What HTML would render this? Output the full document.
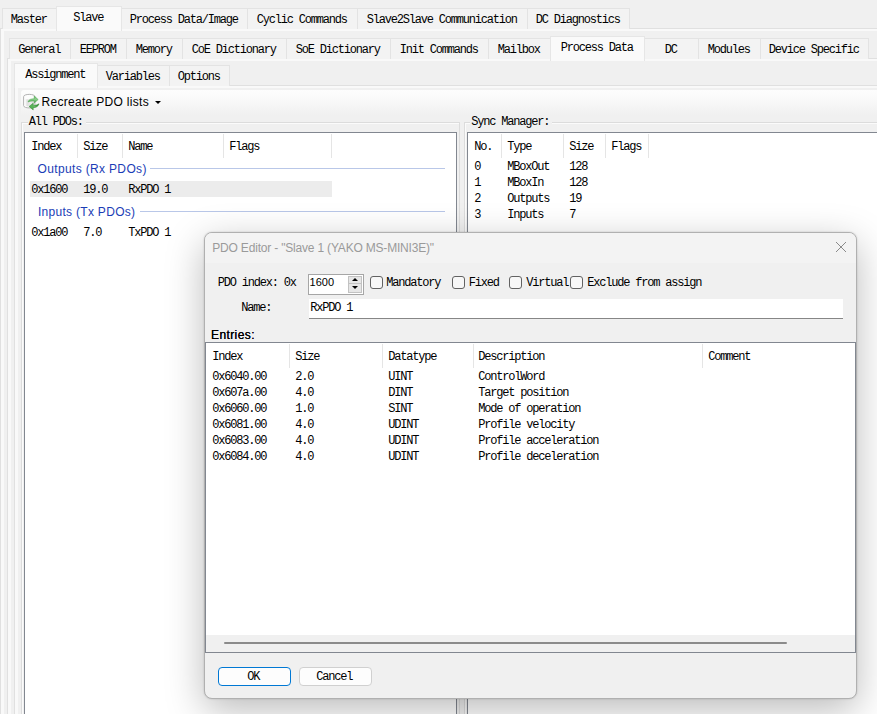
<!DOCTYPE html>
<html lang="en"><head><meta charset="utf-8"><title>PDO Editor</title>
<style>
html,body{margin:0;padding:0}
body{width:877px;height:714px;overflow:hidden;background:#f0f0f0;position:relative;font:12px/12px "Liberation Mono",monospace;color:#000}
div,span{position:absolute;box-sizing:border-box;white-space:pre}
.m{font:12px/12px "Liberation Mono",monospace;letter-spacing:-1.2px;color:#000;margin-left:-0.7px}
.s{font:12px/12px "Liberation Sans",sans-serif;color:#000}
.tab{background:#f3f3f3;border:1px solid #e3e3e3;border-bottom:none}
.tab.sel{background:#fafafa;border-color:#e6e6e6}
.pane{border:1px solid #e0e0e0;background:#f9f9f9}
.page{background:#f0f0f0}
.lv{background:#fff;border:1px solid #828790}
.sep{width:1px;background:#e5e5e5}
.cb{width:13px;height:13px;border:1px solid #626262;border-radius:3px;background:#f7f7f7}
</style></head>
<body>
<div class="pane" style="left:0px;top:28px;width:900px;height:800px;"></div>
<div class="page" style="left:4px;top:31px;width:900px;height:800px;"></div>
<div class="tab" style="left:2px;top:8px;width:55px;height:21px;"></div>
<span class="m" style="left:11.5px;top:14px;">Master</span>
<div class="tab" style="left:121px;top:8px;width:127px;height:21px;"></div>
<span class="m" style="left:130.5px;top:14px;">Process Data/Image</span>
<div class="tab" style="left:247px;top:8px;width:111px;height:21px;"></div>
<span class="m" style="left:257.5px;top:14px;">Cyclic Commands</span>
<div class="tab" style="left:357px;top:8px;width:171px;height:21px;"></div>
<span class="m" style="left:367.5px;top:14px;">Slave2Slave Communication</span>
<div class="tab" style="left:527px;top:8px;width:103px;height:21px;"></div>
<span class="m" style="left:536.5px;top:14px;">DC Diagnostics</span>
<div class="tab sel" style="left:56px;top:6px;width:66px;height:25px;"></div>
<span class="m" style="left:74.0px;top:12px;">Slave</span>
<div class="pane" style="left:7px;top:58px;width:900px;height:800px;"></div>
<div class="page" style="left:11px;top:61px;width:900px;height:800px;"></div>
<div class="tab" style="left:9px;top:38px;width:62px;height:21px;"></div>
<span class="m" style="left:19.0px;top:44px;">General</span>
<div class="tab" style="left:70px;top:38px;width:57px;height:21px;"></div>
<span class="m" style="left:80.5px;top:44px;">EEPROM</span>
<div class="tab" style="left:126px;top:38px;width:57px;height:21px;"></div>
<span class="m" style="left:136.5px;top:44px;">Memory</span>
<div class="tab" style="left:182px;top:38px;width:105px;height:21px;"></div>
<span class="m" style="left:192.5px;top:44px;">CoE Dictionary</span>
<div class="tab" style="left:286px;top:38px;width:105px;height:21px;"></div>
<span class="m" style="left:296.5px;top:44px;">SoE Dictionary</span>
<div class="tab" style="left:390px;top:38px;width:99px;height:21px;"></div>
<span class="m" style="left:400.5px;top:44px;">Init Commands</span>
<div class="tab" style="left:488px;top:38px;width:63px;height:21px;"></div>
<span class="m" style="left:498.5px;top:44px;">Mailbox</span>
<div class="tab" style="left:644px;top:38px;width:55px;height:21px;"></div>
<span class="m" style="left:665.5px;top:44px;">DC</span>
<div class="tab" style="left:698px;top:38px;width:63px;height:21px;"></div>
<span class="m" style="left:708.5px;top:44px;">Modules</span>
<div class="tab" style="left:760px;top:38px;width:109px;height:21px;"></div>
<span class="m" style="left:769.5px;top:44px;">Device Specific</span>
<div class="tab sel" style="left:550px;top:36px;width:95px;height:25px;"></div>
<span class="m" style="left:561.5px;top:42px;">Process Data</span>
<div class="pane" style="left:14px;top:85px;width:900px;height:800px;"></div>
<div class="page" style="left:18px;top:88px;width:900px;height:800px;"></div>
<div class="tab" style="left:97px;top:65px;width:73px;height:21px;"></div>
<span class="m" style="left:106.5px;top:71px;">Variables</span>
<div class="tab" style="left:169px;top:65px;width:61px;height:21px;"></div>
<span class="m" style="left:178.5px;top:71px;">Options</span>
<div class="tab sel" style="left:14px;top:63px;width:84px;height:25px;"></div>
<span class="m" style="left:26.0px;top:69px;">Assignment</span>
<div class="" style="left:21px;top:90px;width:900px;height:25px;background:linear-gradient(#fdfdfd 0%,#f9f9f9 40%,#f0f0f0 100%);border-top-left-radius:3px;"></div>
<svg style="position:absolute;left:20px;top:90px" width="24" height="24" viewBox="0 0 24 24">
<defs>
<linearGradient id="cy" x1="0" x2="1"><stop offset="0" stop-color="#ffffff"/><stop offset="0.25" stop-color="#dedede"/><stop offset="0.7" stop-color="#ececec"/><stop offset="1" stop-color="#d2d2d2"/></linearGradient>
<linearGradient id="ga" x1="0" x2="0" y1="0" y2="1"><stop offset="0" stop-color="#63b963"/><stop offset="0.45" stop-color="#8fd08f"/><stop offset="1" stop-color="#3f9c3f"/></linearGradient>
<linearGradient id="gb" x1="0" x2="1" y1="0.3" y2="0"><stop offset="0" stop-color="#4fae4f"/><stop offset="0.45" stop-color="#62ba62"/><stop offset="1" stop-color="#1c781c"/></linearGradient>
</defs>
<path d="M3.6 6.7 C3.6 3.6 14.9 3.6 14.9 6.7 L14.9 15.6 C14.9 18.7 3.6 18.7 3.6 15.6 Z" fill="#fdfdfd" stroke="#b2b2b2" stroke-width="1"/>
<path d="M5 8.6 C6.4 9.8 11.8 9.8 13.6 8.8 L13.6 15.2 C12.2 17 6.4 17 5 15.2 Z" fill="url(#cy)"/>
<path d="M8 12 C8.8 9.4 11 8.7 14.2 8.8 L14.2 6 L18.2 9.6 L14.2 13 L14.2 11 C11.8 10.8 9.8 11.2 8 12 Z" fill="url(#ga)" stroke="#4aa64a" stroke-width="0.5"/>
<path d="M19 13.8 C18.3 16.6 16 17.6 13.2 17.7 L13.2 20 L9.1 16.5 L13.2 13.2 L13.2 15.4 C15.5 15.4 17.4 14.9 19 13.8 Z" fill="url(#gb)" stroke="#2c862c" stroke-width="0.5"/>
</svg>
<span class="s" style="left:41.5px;top:96px;letter-spacing:0.3px">Recreate PDO lists</span>
<div style="left:155px;top:101px;width:0;height:0;border-left:3px solid transparent;border-right:3px solid transparent;border-top:3px solid #000"></div>
<div class="" style="left:21px;top:122px;width:439px;height:700px;border:1px solid #dcdcdc;box-shadow:inset 1px 1px 0 #fbfbfb;"></div>
<div class="" style="left:27.5px;top:116px;width:58px;height:13px;background:#f0f0f0"></div>
<span class="m" style="left:29.5px;top:116px;">All PDOs:</span>
<div class="" style="left:464px;top:122px;width:500px;height:700px;border:1px solid #dcdcdc;box-shadow:inset 1px 1px 0 #fbfbfb;"></div>
<div class="" style="left:470px;top:116px;width:82px;height:13px;background:#f0f0f0"></div>
<span class="m" style="left:472px;top:116px;">Sync Manager:</span>
<div class="lv" style="left:24px;top:132px;width:433px;height:700px;"></div>
<div class="sep" style="left:77px;top:134px;width:1px;height:24px;"></div>
<div class="sep" style="left:122px;top:134px;width:1px;height:24px;"></div>
<div class="sep" style="left:223px;top:134px;width:1px;height:24px;"></div>
<div class="sep" style="left:331px;top:134px;width:1px;height:24px;"></div>
<span class="m" style="left:32px;top:141px;">Index</span>
<span class="m" style="left:84px;top:141px;">Size</span>
<span class="m" style="left:129px;top:141px;">Name</span>
<span class="m" style="left:230px;top:141px;">Flags</span>
<span class="s" style="left:37.6px;top:163px;color:#1b3db6;letter-spacing:0.34px">Outputs (Rx PDOs)</span>
<div class="" style="left:150px;top:168px;width:295px;height:1px;background:#b9c7e8"></div>
<div class="" style="left:30px;top:181px;width:302px;height:16px;background:#ececec"></div>
<span class="m" style="left:32px;top:184px;">0x1600</span>
<span class="m" style="left:84px;top:184px;">19.0</span>
<span class="m" style="left:129px;top:184px;">RxPDO 1</span>
<span class="s" style="left:37.9px;top:206px;color:#1b3db6;letter-spacing:0.3px">Inputs (Tx PDOs)</span>
<div class="" style="left:140px;top:211px;width:305px;height:1px;background:#b9c7e8"></div>
<span class="m" style="left:32px;top:227px;">0x1a00</span>
<span class="m" style="left:84px;top:227px;">7.0</span>
<span class="m" style="left:129px;top:227px;">TxPDO 1</span>
<div class="lv" style="left:467px;top:132px;width:500px;height:700px;"></div>
<div class="sep" style="left:501px;top:134px;width:1px;height:24px;"></div>
<div class="sep" style="left:563px;top:134px;width:1px;height:24px;"></div>
<div class="sep" style="left:605px;top:134px;width:1px;height:24px;"></div>
<div class="sep" style="left:648px;top:134px;width:1px;height:24px;"></div>
<span class="m" style="left:475px;top:141px;">No.</span>
<span class="m" style="left:508px;top:141px;">Type</span>
<span class="m" style="left:570px;top:141px;">Size</span>
<span class="m" style="left:612px;top:141px;">Flags</span>
<span class="m" style="left:475px;top:161px;">0</span>
<span class="m" style="left:508px;top:161px;">MBoxOut</span>
<span class="m" style="left:570px;top:161px;">128</span>
<span class="m" style="left:475px;top:177px;">1</span>
<span class="m" style="left:508px;top:177px;">MBoxIn</span>
<span class="m" style="left:570px;top:177px;">128</span>
<span class="m" style="left:475px;top:193px;">2</span>
<span class="m" style="left:508px;top:193px;">Outputs</span>
<span class="m" style="left:570px;top:193px;">19</span>
<span class="m" style="left:475px;top:209px;">3</span>
<span class="m" style="left:508px;top:209px;">Inputs</span>
<span class="m" style="left:570px;top:209px;">7</span>
<div style="left:204px;top:232px;width:653px;height:467px;border:1px solid #b0b0b0;border-radius:8px;background:#f0f0f0;box-shadow:0 11px 38px rgba(0,0,0,0.27),0 0 2px rgba(0,0,0,0.18);overflow:hidden">
<div class="" style="left:0px;top:0px;width:651px;height:30px;background:#f3f3f3"></div>
<span class="s" style="left:7.300000000000011px;top:9px;color:#9a9a9a;letter-spacing:-0.19px">PDO Editor - "Slave 1 (YAKO MS-MINI3E)"</span>
<svg style="position:absolute;left:630px;top:8px" width="12" height="12" viewBox="0 0 12 12"><path d="M1 1 L11 11 M11 1 L1 11" stroke="#8a8a8a" stroke-width="1" fill="none"/></svg>
<span class="m" style="left:13.5px;top:44px;">PDO index: 0x</span>
<div class="" style="left:103px;top:41px;width:56px;height:21px;background:#fff;border:1px solid #a6a6a6"></div>
<span class="s" style="left:104.60000000000002px;top:43px;font-size:11px">1600</span>
<div class="" style="left:143px;top:43px;width:14px;height:8px;background:#e6e6e6;border:1px solid #c2c2c2"></div>
<div class="" style="left:143px;top:51px;width:14px;height:9px;background:#e6e6e6;border:1px solid #c2c2c2;border-top:none"></div>
<div style="left:147px;top:45px;width:0;height:0;border-left:3px solid transparent;border-right:3px solid transparent;border-bottom:3px solid #000"></div>
<div style="left:147px;top:53px;width:0;height:0;border-left:3px solid transparent;border-right:3px solid transparent;border-top:3px solid #000"></div>
<div class="cb" style="left:165px;top:43px;width:13px;height:13px;"></div>
<span class="m" style="left:182px;top:44px;">Mandatory</span>
<div class="cb" style="left:247px;top:43px;width:13px;height:13px;"></div>
<span class="m" style="left:264.5px;top:44px;">Fixed</span>
<div class="cb" style="left:304px;top:43px;width:13px;height:13px;"></div>
<span class="m" style="left:322px;top:44px;">Virtual</span>
<div class="cb" style="left:365px;top:43px;width:13px;height:13px;"></div>
<span class="m" style="left:383px;top:44px;">Exclude from assign</span>
<span class="m" style="left:37px;top:69px;">Name:</span>
<div class="" style="left:104px;top:66px;width:534px;height:20px;background:#fff;border-bottom:1px solid #868686"></div>
<span class="m" style="left:106px;top:69px;">RxPDO 1</span>
<span class="s" style="left:6px;top:96px;letter-spacing:0.4px;text-shadow:0 0 0.6px #000">Entries:</span>
<div class="lv" style="left:0px;top:109px;width:651px;height:311px;"></div>
<div class="sep" style="left:84px;top:111px;width:1px;height:24px;"></div>
<div class="sep" style="left:177px;top:111px;width:1px;height:24px;"></div>
<div class="sep" style="left:268px;top:111px;width:1px;height:24px;"></div>
<div class="sep" style="left:497px;top:111px;width:1px;height:24px;"></div>
<span class="m" style="left:8px;top:118px;">Index</span>
<span class="m" style="left:91px;top:118px;">Size</span>
<span class="m" style="left:184px;top:118px;">Datatype</span>
<span class="m" style="left:274px;top:118px;">Description</span>
<span class="m" style="left:504px;top:118px;">Comment</span>
<span class="m" style="left:8px;top:138px;">0x6040.00</span>
<span class="m" style="left:91px;top:138px;">2.0</span>
<span class="m" style="left:184px;top:138px;">UINT</span>
<span class="m" style="left:274px;top:138px;">ControlWord</span>
<span class="m" style="left:8px;top:154px;">0x607a.00</span>
<span class="m" style="left:91px;top:154px;">4.0</span>
<span class="m" style="left:184px;top:154px;">DINT</span>
<span class="m" style="left:274px;top:154px;">Target position</span>
<span class="m" style="left:8px;top:170px;">0x6060.00</span>
<span class="m" style="left:91px;top:170px;">1.0</span>
<span class="m" style="left:184px;top:170px;">SINT</span>
<span class="m" style="left:274px;top:170px;">Mode of operation</span>
<span class="m" style="left:8px;top:186px;">0x6081.00</span>
<span class="m" style="left:91px;top:186px;">4.0</span>
<span class="m" style="left:184px;top:186px;">UDINT</span>
<span class="m" style="left:274px;top:186px;">Profile velocity</span>
<span class="m" style="left:8px;top:202px;">0x6083.00</span>
<span class="m" style="left:91px;top:202px;">4.0</span>
<span class="m" style="left:184px;top:202px;">UDINT</span>
<span class="m" style="left:274px;top:202px;">Profile acceleration</span>
<span class="m" style="left:8px;top:218px;">0x6084.00</span>
<span class="m" style="left:91px;top:218px;">4.0</span>
<span class="m" style="left:184px;top:218px;">UDINT</span>
<span class="m" style="left:274px;top:218px;">Profile deceleration</span>
<div class="" style="left:1px;top:402px;width:649px;height:17px;background:#f0f0f0"></div>
<div class="" style="left:19px;top:409px;width:563px;height:2px;background:#8b8b8b;border-radius:1px"></div>
<div class="" style="left:13px;top:434px;width:73px;height:19px;background:#fdfdfd;border:1px solid #0078d4;border-radius:4px"></div>
<span class="m" style="left:43px;top:438px;">OK</span>
<div class="" style="left:94px;top:434px;width:73px;height:19px;background:#fdfdfd;border:1px solid #d0d0d0;border-radius:4px"></div>
<span class="m" style="left:112px;top:438px;">Cancel</span>
</div>
</body></html>
